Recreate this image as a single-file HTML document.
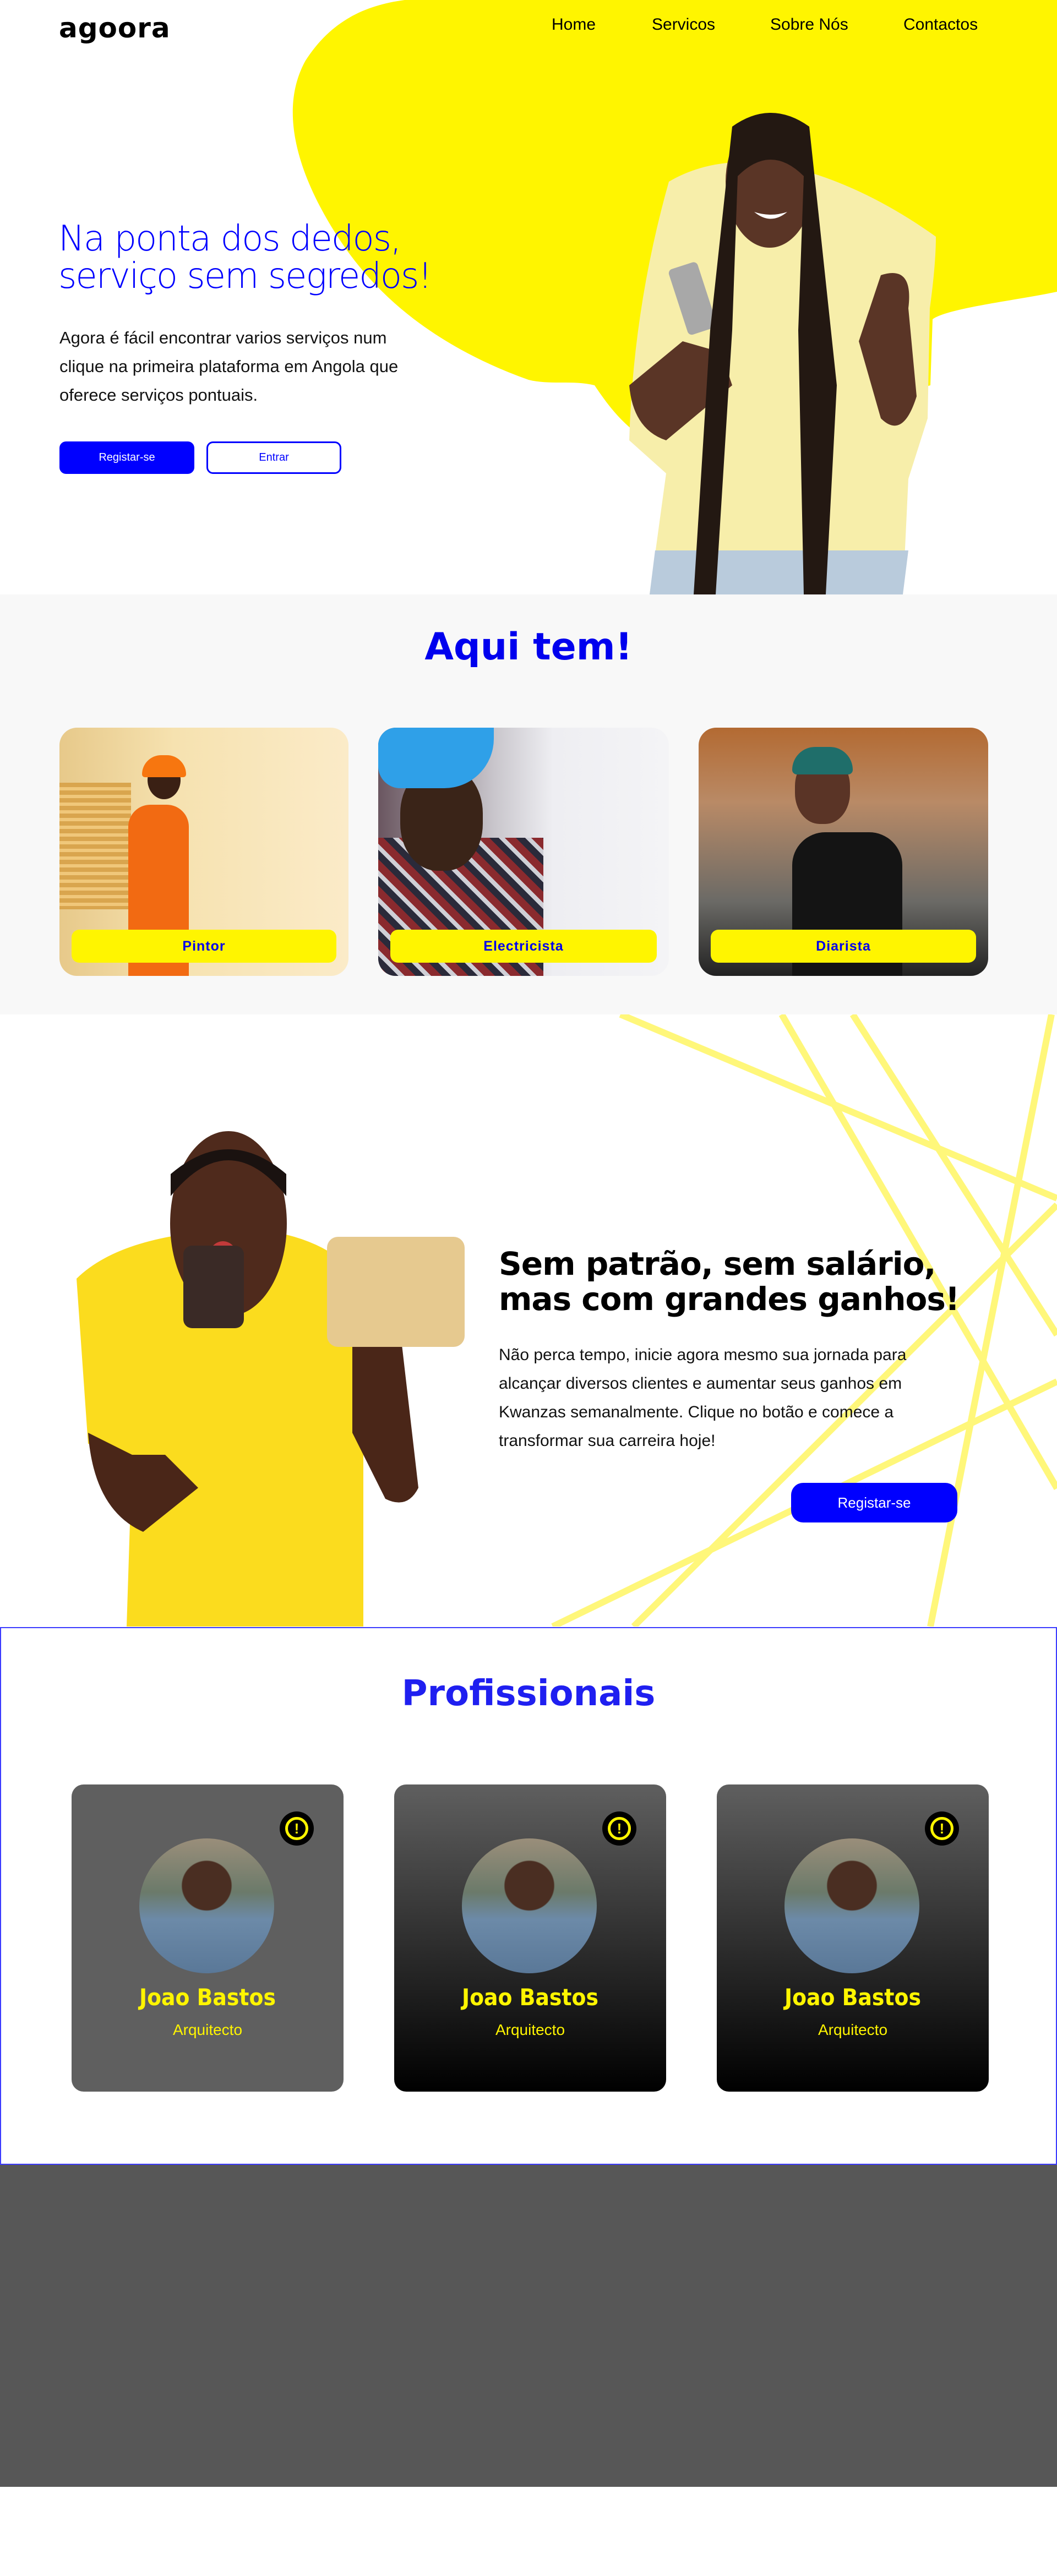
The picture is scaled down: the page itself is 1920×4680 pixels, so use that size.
<!DOCTYPE html>
<html><head><meta charset="utf-8"><style>
*{margin:0;padding:0;box-sizing:border-box}
body{width:1920px;height:4680px;position:relative;background:#fff;font-family:"Liberation Sans",sans-serif;overflow:hidden}
.a{position:absolute}
.nav{top:28px;font-size:30px;color:#000;font-family:"Liberation Sans Narrow","Liberation Sans",sans-serif}
.rd{font-family:"DejaVu Sans","Liberation Sans",sans-serif;font-weight:bold}
.card{border-radius:32px;overflow:hidden}
.lab{left:22px;right:22px;bottom:24px;height:60px;background:#fff500;border-radius:14px;color:#0000ee;font-size:25px;text-align:center;line-height:60px;font-weight:bold;letter-spacing:1px}
.pro{top:3242px;width:494px;height:558px;border-radius:22px}
.av{width:245px;height:245px;border-radius:50%;left:123px;top:98px;overflow:hidden}
.ic{width:62px;height:62px;border-radius:50%;background:#000;left:378px;top:49px}
.ic div{position:absolute;left:10px;top:10px;width:42px;height:42px;border:5px solid #fff500;border-radius:50%;color:#fff500;font-weight:bold;font-size:26px;text-align:center;line-height:32px}
.nm{top:362px;width:100%;text-align:center;color:#fff500;font-size:42px;font-weight:bold;font-family:"DejaVu Sans Condensed","DejaVu Sans",sans-serif}
.jb{top:430px;width:100%;text-align:center;color:#fff500;font-size:28px;font-family:"Liberation Sans Narrow","Liberation Sans",sans-serif}
</style></head><body>

<svg class="a" style="left:0;top:0" width="1920" height="1080">
<path d="M735 0 L1920 0 L1920 530 C1850 545 1720 560 1694 580 L1690 700 L1224 830 C1150 790 1120 760 1080 700 C1040 690 1000 700 960 690 C820 640 700 560 620 440 C540 320 505 200 555 110 C600 40 660 10 735 0 Z" fill="#fff500"/>
<path d="M1215 330 Q1300 280 1420 300 Q1560 330 1700 430 Q1700 480 1689 560 L1685 760 L1650 870 L1640 1080 L1180 1080 L1210 860 L1143 800 Q1150 560 1215 330 Z" fill="#f7eeaa"/>
<path d="M1190 1000 L1650 1000 L1640 1080 L1180 1080 Z" fill="#b9cbdc"/>
<path d="M1143 700 Q1150 780 1210 800 L1330 700 L1310 640 L1240 620 Z" fill="#5a3526"/>
<path d="M1600 500 Q1660 480 1650 560 L1665 720 Q1640 800 1600 760 L1560 620 Z" fill="#5a3526"/>
<rect x="1230" y="480" width="55" height="125" rx="8" fill="#a8a8a8" transform="rotate(-18 1257 540)"/>
<ellipse cx="1398" cy="330" rx="80" ry="120" fill="#5a3526"/>
<path d="M1330 230 Q1400 180 1470 230 L1520 700 L1500 1080 L1460 1080 L1450 600 L1460 320 Q1400 260 1340 320 L1330 600 L1300 1080 L1260 1080 L1290 600 Z" fill="#231812"/>
<path d="M1370 385 Q1400 410 1430 385 Q1400 395 1370 385 Z" fill="#fff"/>
</svg>

<div class="a rd" style="left:107px;top:22px;font-size:50px;color:#000;letter-spacing:1px">agoora</div>
<div class="a nav" style="left:1002px">Home</div>
<div class="a nav" style="left:1184px">Servicos</div>
<div class="a nav" style="left:1399px">Sobre Nós</div>
<div class="a nav" style="left:1641px">Contactos</div>

<div class="a" style="left:106px;top:400px;font-size:64px;line-height:68px;color:#0000ff;font-family:'DejaVu Sans','Liberation Sans',sans-serif;letter-spacing:-2px;font-weight:300">Na ponta dos dedos,<br>serviço sem segredos!</div>
<div class="a" style="left:108px;top:588px;width:760px;font-size:31px;line-height:52px;color:#111;font-family:'Liberation Sans Narrow','Liberation Sans',sans-serif;white-space:nowrap">Agora é fácil encontrar varios serviços num<br>clique na primeira plataforma em Angola que<br>oferece serviços pontuais.</div>
<div class="a" style="left:108px;top:802px;width:245px;height:59px;background:#0000ff;border-radius:12px;color:#fff;font-size:20px;text-align:center;line-height:59px;font-family:'Liberation Sans Narrow','Liberation Sans',sans-serif">Registar-se</div>
<div class="a" style="left:375px;top:802px;width:245px;height:59px;border:3px solid #0000ff;border-radius:12px;color:#0000ff;font-size:20px;text-align:center;line-height:53px;font-family:'Liberation Sans Narrow','Liberation Sans',sans-serif">Entrar</div>

<div class="a" style="left:0;top:1080px;width:1920px;height:763px;background:#f8f8f8"></div>
<div class="a rd" style="left:0;top:1136px;width:1920px;text-align:center;font-size:68px;color:#0000ee">Aqui tem!</div>
<div class="a card" style="left:108px;top:1322px;width:525px;height:451px;background:linear-gradient(90deg,#e7c98a 0%,#f6e2b0 40%,#fbebc8 100%)">
<div class="a" style="left:0;top:100px;width:130px;height:230px;background:repeating-linear-gradient(#d9a54e 0 8px,#f0c77a 8px 14px)"></div>
<div class="a" style="left:125px;top:140px;width:110px;height:311px;background:#f26a12;border-radius:40px 40px 0 0"></div>
<div class="a" style="left:160px;top:60px;width:60px;height:70px;background:#3a2014;border-radius:50%"></div>
<div class="a" style="left:150px;top:50px;width:80px;height:40px;background:#f7760f;border-radius:40px 40px 6px 6px"></div>
<div class="a lab">Pintor</div></div>
<div class="a card" style="left:687px;top:1322px;width:528px;height:451px;background:linear-gradient(90deg,#6a5660 0%,#c9c6cc 40%,#eeeef2 60%,#f4f4f6 100%)">
<div class="a" style="left:0;top:200px;width:300px;height:251px;background:repeating-linear-gradient(45deg,#8a2a2e 0 14px,#2a2a3a 14px 26px,#cfcfd6 26px 34px)"></div>
<div class="a" style="left:40px;top:70px;width:150px;height:190px;background:#3a2418;border-radius:45%"></div>
<div class="a" style="left:0;top:0;width:210px;height:110px;background:#2fa0e8;border-radius:0 0 90px 40px"></div>
<div class="a lab">Electricista</div></div>
<div class="a card" style="left:1269px;top:1322px;width:526px;height:451px;background:linear-gradient(180deg,#b36a32 0%,#b98a66 30%,#6b6a66 70%,#222 100%)">
<div class="a" style="left:170px;top:190px;width:200px;height:261px;background:#141414;border-radius:60px 60px 0 0"></div>
<div class="a" style="left:175px;top:50px;width:100px;height:125px;background:#5a3426;border-radius:45%"></div>
<div class="a" style="left:170px;top:35px;width:110px;height:50px;background:#1f6e6a;border-radius:50px 50px 10px 10px"></div>
<div class="a lab">Diarista</div></div>

<svg class="a" style="left:0;top:1843px" width="1920" height="1112">
<g stroke="#fff77a" stroke-width="12" fill="none">
<line x1="1127" y1="0" x2="1920" y2="334"/>
<line x1="1420" y1="0" x2="1920" y2="861"/>
<line x1="1549" y1="0" x2="1920" y2="582"/>
<line x1="1910" y1="0" x2="1690" y2="1112"/>
<line x1="1004" y1="1112" x2="1920" y2="667"/>
<line x1="1151" y1="1112" x2="1920" y2="346"/>
</g>
<path d="M139 480 Q200 420 330 400 L520 400 Q640 430 672 520 L690 700 L660 760 L660 1112 L230 1112 L240 800 L160 780 Z" fill="#fbdc1e"/>
<path d="M160 760 Q170 900 260 940 L360 860 L300 800 L240 800 Z" fill="#4a2618"/>
<path d="M640 560 Q700 520 730 600 L760 860 Q740 900 700 880 L640 760 Z" fill="#4a2618"/>
<rect x="594" y="404" width="250" height="200" rx="20" fill="#e6c98f"/>
<ellipse cx="415" cy="380" rx="106" ry="168" fill="#4f2a1c"/>
<path d="M310 330 Q415 200 520 330 L520 290 Q415 200 310 290 Z" fill="#1a1210"/>
<ellipse cx="405" cy="452" rx="30" ry="40" fill="#c23a3a"/>
<rect x="333" y="420" width="110" height="150" rx="16" fill="#3a2a26"/>
</svg>
<div class="a rd" style="left:906px;top:2264px;font-size:58px;line-height:64px;color:#000;letter-spacing:-1px">Sem patrão, sem salário,<br>mas com grandes ganhos!</div>
<div class="a" style="left:906px;top:2436px;width:850px;font-size:30px;line-height:52px;color:#111">Não perca tempo, inicie agora mesmo sua jornada para alcançar diversos clientes e aumentar seus ganhos em Kwanzas semanalmente. Clique no botão e comece a transformar sua carreira hoje!</div>
<div class="a" style="left:1437px;top:2694px;width:302px;height:72px;background:#0000ff;border-radius:22px;color:#fff;font-size:26px;text-align:center;line-height:72px">Registar-se</div>

<div class="a" style="left:0;top:2956px;width:1920px;height:977px;border:2px solid #3b3bff"></div>
<div class="a rd" style="left:0;top:3040px;width:1920px;text-align:center;font-size:64px;color:#1f1ff0">Profissionais</div>
<div class="a pro" style="left:130px;background:#5f5f5f"><div class="a ic"><div>!</div></div><div class="a av" style="background:radial-gradient(circle at 50% 35%,#4a2e22 0 22%,transparent 23%),linear-gradient(180deg,#9a8e7a 0%,#6b7a6a 40%,#6c8aa8 60%,#5a7898 100%)"></div><div class="a nm">Joao Bastos</div><div class="a jb">Arquitecto</div></div>
<div class="a pro" style="left:716px;background:linear-gradient(180deg,#5f5f5f,#000)"><div class="a ic"><div>!</div></div><div class="a av" style="background:radial-gradient(circle at 50% 35%,#4a2e22 0 22%,transparent 23%),linear-gradient(180deg,#9a8e7a 0%,#6b7a6a 40%,#6c8aa8 60%,#5a7898 100%)"></div><div class="a nm">Joao Bastos</div><div class="a jb">Arquitecto</div></div>
<div class="a pro" style="left:1302px;background:linear-gradient(180deg,#5f5f5f,#000)"><div class="a ic"><div>!</div></div><div class="a av" style="background:radial-gradient(circle at 50% 35%,#4a2e22 0 22%,transparent 23%),linear-gradient(180deg,#9a8e7a 0%,#6b7a6a 40%,#6c8aa8 60%,#5a7898 100%)"></div><div class="a nm">Joao Bastos</div><div class="a jb">Arquitecto</div></div>

<div class="a" style="left:0;top:3933px;width:1920px;height:585px;background:#575757"></div>
</body></html>
